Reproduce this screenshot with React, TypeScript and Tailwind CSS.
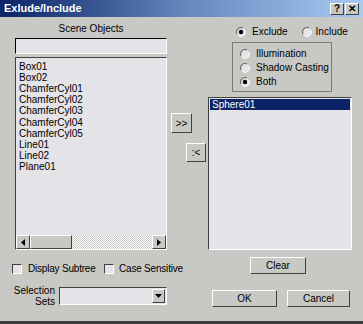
import React from 'react';

const SCENE = [
  'Box01',
  'Box02',
  'ChamferCyl01',
  'ChamferCyl02',
  'ChamferCyl03',
  'ChamferCyl04',
  'ChamferCyl05',
  'Line01',
  'Line02',
  'Plane01',
];

const raised = 'border border-t-white border-l-white border-b-[#404040] border-r-[#404040] bg-[#c8c8c4]';
const sunken = 'border border-t-[#404040] border-l-[#404040] border-b-white border-r-white';

function Radio({ checked }: { checked?: boolean }) {
  return (
    <svg width="10" height="10" viewBox="0 0 10 10" className="shrink-0">
      <circle cx="5" cy="5" r="4.5" fill="#e4e3e8" />
      <path d="M1 7 A4.5 4.5 0 0 1 7 1" stroke="#707070" strokeWidth="1.2" fill="none" />
      <path d="M9 3 A4.5 4.5 0 0 1 3 9" stroke="#ffffff" strokeWidth="1" fill="none" />
      {checked && <circle cx="5" cy="5" r="2.2" fill="#000" />}
    </svg>
  );
}

function Check() {
  return <div className={`shrink-0 w-[10px] h-[10px] bg-[#e4e3e8] ${sunken}`} />;
}

function Btn({ label, className }: { label: string; className: string }) {
  return (
    <div className={`${raised} flex items-center justify-center text-[10px] text-black ${className}`}>
      {label}
    </div>
  );
}

export default function App() {
  return (
    <div
      className="w-[363px] h-[324px] bg-[#c8c8c4] flex flex-col overflow-hidden text-black"
      style={{ fontFamily: '"Liberation Sans", Arial, sans-serif' }}
    >
      {/* title bar */}
      <div className="h-[17px] flex items-center bg-gradient-to-r from-[#0c2366] via-[#6685bc] to-[#a8cbf2] pl-[4px] pr-[4px]">
        <span className="text-white font-bold text-[11px] leading-none">Exlude/Include</span>
        <div className="ml-auto flex gap-[1px]">
          <div className={`${raised} w-[14px] h-[12px] flex items-center justify-center text-[10px] font-bold leading-none`}>?</div>
          <div className={`${raised} w-[14px] h-[12px] flex items-center justify-center text-[10px] font-bold leading-none`}>✕</div>
        </div>
      </div>

      <div className="flex flex-1 items-start">
        {/* left column */}
        <div className="ml-[15px] w-[152px] flex flex-col text-[10px] leading-none">
          <div className="h-[21px] flex items-center justify-center pt-[2px]">Scene Objects</div>
          <div className="h-[16px] bg-[#e4e3e8] border border-t-black border-l-black border-b-white border-r-white" />
          <div className={`mt-[3px] h-[193px] bg-[#e4e3e8] ${sunken} flex flex-col`}>
            <div className="flex-1 pt-[3px] pl-[3px] flex flex-col">
              {SCENE.map((s) => (
                <div key={s} className="h-[11.2px] flex items-center whitespace-nowrap">
                  {s}
                </div>
              ))}
            </div>
            <div className="h-[14px] flex">
              <div className={`${raised} w-[14px] h-[14px] flex items-center justify-center`}>
                <svg width="4" height="7" viewBox="0 0 4 7"><path d="M4 0 L0 3.5 L4 7Z" fill="#000" /></svg>
              </div>
              <div className={`${raised} w-[42px] h-[14px]`} />
              <div className="flex-1 h-[14px] bg-[repeating-conic-gradient(#c8c8c4_0%_25%,#ffffff_0%_50%)] bg-[length:2px_2px]" />
              <div className={`${raised} w-[14px] h-[14px] flex items-center justify-center`}>
                <svg width="4" height="7" viewBox="0 0 4 7"><path d="M0 0 L4 3.5 L0 7Z" fill="#000" /></svg>
              </div>
            </div>
          </div>
          <div className="mt-[14px] h-[10px] flex items-center whitespace-nowrap -ml-[3px]">
            <div className="w-[92px] shrink-0 flex items-center">
              <Check />
              <span className="ml-[6px] tracking-[-0.2px]">Display Subtree</span>
            </div>
            <Check />
            <span className="ml-[5px] tracking-[-0.2px]">Case Sensitive</span>
          </div>
          <div className="mt-[13px] h-[18px] flex -ml-[1px]">
            <div className="w-[41px] flex flex-col items-end text-[10px] leading-[11px] -mt-[2px]">
              <span>Selection</span>
              <span>Sets</span>
            </div>
            <div className={`ml-[4px] w-[111px] h-[18px] bg-[#e4e3e8] ${sunken} flex justify-end p-[1px]`}>
              <div className={`${raised} w-[13px] h-full flex items-center justify-center`}>
                <svg width="7" height="4" viewBox="0 0 7 4"><path d="M0 0 L7 0 L3.5 4Z" fill="#000" /></svg>
              </div>
            </div>
          </div>
        </div>

        {/* middle column */}
        <div className="w-[41px] flex flex-col">
          <Btn label=">>" className="mt-[96px] ml-[4px] w-[21px] h-[20px]" />
          <Btn label=":<" className="mt-[10px] ml-[19px] w-[20px] h-[19px]" />
        </div>

        {/* right column */}
        <div className="w-[144px] flex flex-col text-[10px] leading-none">
          <div className="mt-[10px] h-[10px] flex items-center ml-[28px] whitespace-nowrap">
            <Radio checked />
            <span className="ml-[6px]">Exclude</span>
            <div className="ml-[14px]"><Radio /></div>
            <span className="ml-[4px]">Include</span>
          </div>
          <div className="mt-[5px] ml-[24px] w-[100px] h-[50px] border border-[#7a7a7a] flex flex-col pl-[7px] pt-[6px] gap-[4px]">
            <div className="h-[10px] flex items-center"><Radio /><span className="ml-[6px]">Illumination</span></div>
            <div className="h-[10px] flex items-center"><Radio /><span className="ml-[6px]">Shadow Casting</span></div>
            <div className="h-[10px] flex items-center"><Radio checked /><span className="ml-[6px]">Both</span></div>
          </div>
          <div className={`mt-[5px] h-[153px] bg-[#e4e3e8] ${sunken} p-[1px]`}>
            <div className="h-[11px] bg-[#0c2366] text-white flex items-center pl-[2px]">Sphere01</div>
          </div>
          <Btn label="Clear" className="mt-[7px] ml-[42px] w-[56px] h-[17px]" />
          <div className="mt-[16px] flex ml-[4px] gap-[10px]">
            <Btn label="OK" className="w-[65px] h-[17px]" />
            <Btn label="Cancel" className="w-[63px] h-[17px]" />
          </div>
        </div>
      </div>

      <div className="h-[3px] bg-[#3c3c3c]" />
    </div>
  );
}
